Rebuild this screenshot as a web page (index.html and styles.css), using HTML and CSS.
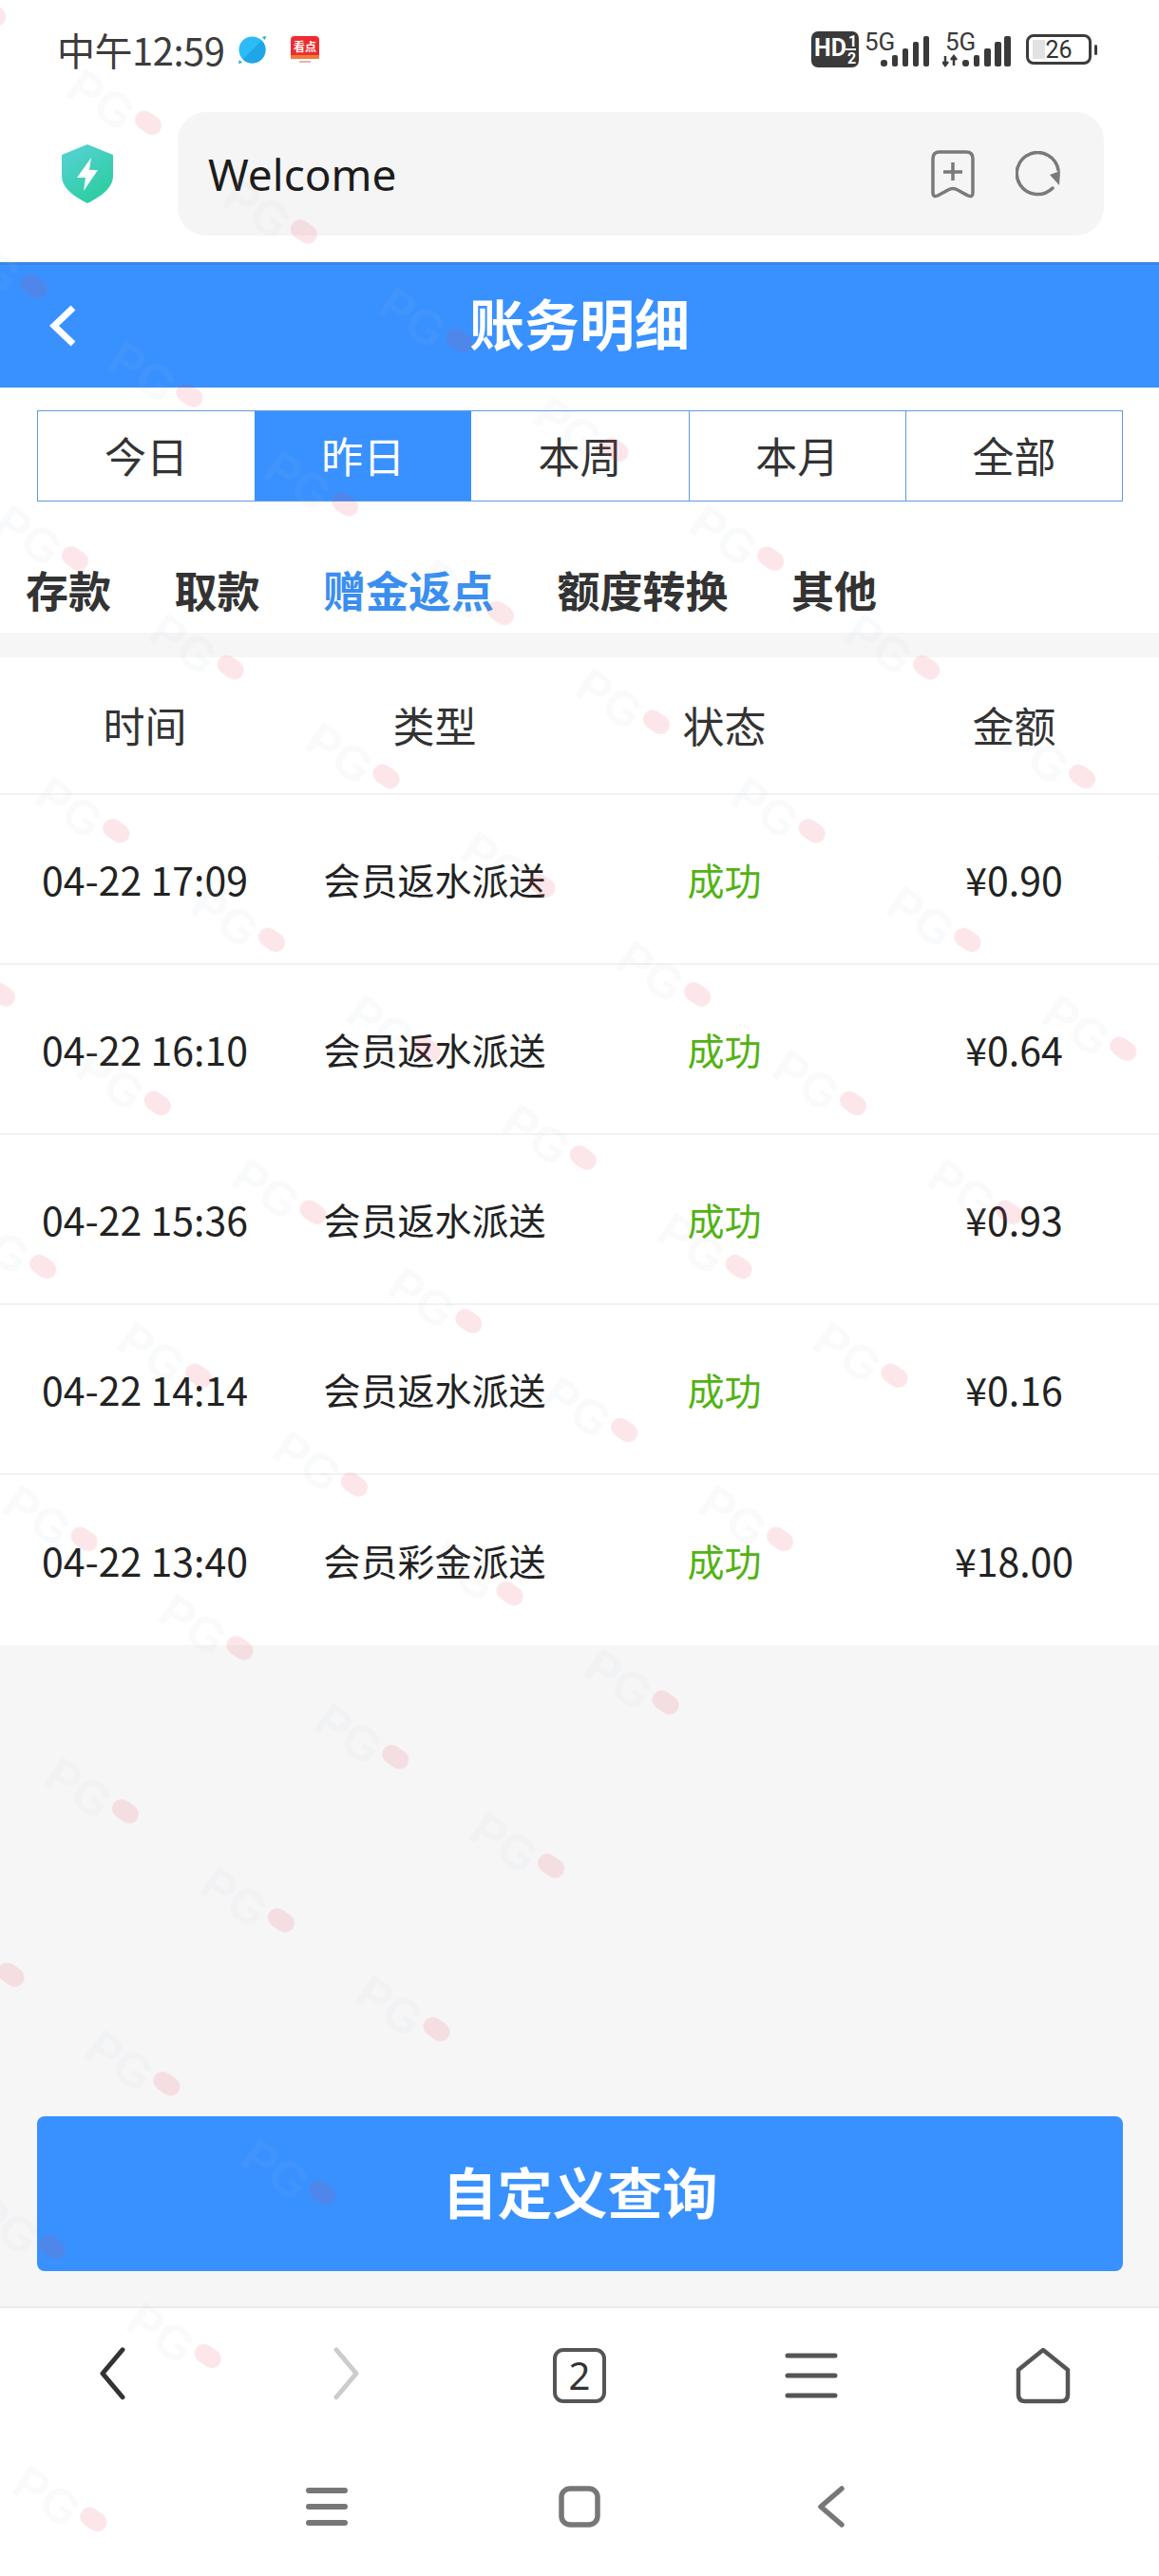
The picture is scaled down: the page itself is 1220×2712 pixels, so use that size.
FILE: index.html

```html
<!DOCTYPE html>
<html lang="zh-CN">
<head>
  <meta charset="UTF-8" />
  <meta name="viewport" content="width=device-width, initial-scale=1.0"/>
  <title>账务明细</title>
  <link rel="stylesheet" href="styles.css">
</head>
<body>
  <div class="phone">
    <div class="status-bar">
      <div class="status-left">
        <span class="clock">中午12:59</span>
        <svg class="ball" viewBox="0 0 31 31">
          <path d="M26 2 L30 1 L29 5 Z M2 26 L1 30 L5 29 Z" fill="#1ea5dc"/>
          <circle cx="15.5" cy="15.5" r="14" fill="#2cbcf5"/>
          <path d="M25.4 5.6 A14 14 0 0 1 5.6 25.4 Z" fill="#1fa6e6"/>
        </svg>
        <svg class="news" viewBox="0 0 30 28">
          <rect x="0" y="0" width="30" height="24" rx="4" fill="#ee2c30"/>
          <rect x="0" y="20" width="30" height="4" fill="#f07a3c"/>
          <text x="15" y="16" class="news-text">看点</text>
          <rect x="9" y="26" width="12" height="2" fill="#e5b5b5"/>
        </svg>
      </div>
      <div class="status-right">
        <svg class="hd" viewBox="0 0 50 38">
          <rect width="50" height="38" rx="7" fill="#3a3a3a"/>
          <text x="3" y="26" class="hd-text">HD</text>
          <text x="39" y="16" class="hd-num">1</text>
          <rect x="36" y="18" width="11" height="2" fill="#fff"/>
          <text x="38" y="34" class="hd-num">2</text>
        </svg>
        <svg class="signal" viewBox="0 -4 68 45">
          <text x="0" y="19" class="sig-text">5G</text>
          <rect x="17" y="29" width="7" height="7" rx="3"/>
          <rect x="29" y="24" width="6" height="12" rx="2"/>
          <rect x="40" y="17" width="6" height="19" rx="2"/>
          <rect x="51" y="10" width="6" height="26" rx="2"/>
          <rect x="62" y="4" width="6" height="32" rx="2"/>
        </svg>
        <svg class="signal signal-data" viewBox="0 -4 72 45">
          <text x="3" y="19" class="sig-text">5G</text>
          <path d="M3 25 V35 M0 31 L3 35 L6 31 M12 35 V25 M9 29 L12 25 L15 29" fill="none" stroke="#3a3a3a" stroke-width="2.5"/>
          <rect x="21" y="29" width="7" height="7" rx="3"/>
          <rect x="33" y="24" width="6" height="12" rx="2"/>
          <rect x="44" y="17" width="7" height="19" rx="2"/>
          <rect x="55" y="10" width="7" height="26" rx="2"/>
          <rect x="65" y="4" width="7" height="32" rx="2"/>
        </svg>
        <div class="battery">
          <div class="battery-body">
            <span class="battery-fill"></span>
            <span class="battery-num">26</span>
          </div>
          <span class="battery-nub"></span>
        </div>
      </div>
    </div>

    <div class="address-row">
      <svg class="shield" viewBox="0 0 54 62">
        <defs>
          <linearGradient id="shieldFill" x1="0.2" y1="0" x2="0.8" y2="1">
            <stop offset="0" stop-color="#55d2d2"/>
            <stop offset="1" stop-color="#28cd9c"/>
          </linearGradient>
        </defs>
        <path d="M27 0 L54 11 V33 C54 46 41 55 27 62 C13 55 0 46 0 33 V11 Z" fill="url(#shieldFill)"/>
        <path d="M31 14 L16 35 H25 L23 49 L38 27 H29 Z" fill="#fff"/>
      </svg>
      <div class="address-pill">
        <span class="address-text">Welcome</span>
        <svg class="bookmark" viewBox="0 0 46 51">
          <path d="M9 2 H37 Q44 2 44 9 V45 Q44 50 39 48 L28 42 Q23 39 18 42 L7 48 Q2 50 2 45 V9 Q2 2 9 2 Z" fill="none" stroke="#7a7a7a" stroke-width="3.5"/>
          <path d="M23 13 V32 M13 23 H33" stroke="#7a7a7a" stroke-width="3.5" fill="none"/>
        </svg>
        <svg class="reload" viewBox="0 0 48 48">
          <path d="M39 39 A22 22 0 1 1 45 20" fill="none" stroke="#7a7a7a" stroke-width="3.5" stroke-linecap="round"/>
          <path d="M36 25 L47 21 L46 36 Z" fill="#7a7a7a"/>
        </svg>
      </div>
    </div>

    <header class="title-bar">
      <svg class="title-back" viewBox="0 0 28 44">
        <path d="M25 3 L5 22 L25 41" fill="none" stroke="#fff" stroke-width="7"/>
      </svg>
      <h1 class="title">账务明细</h1>
    </header>

    <div class="range-section">
      <div class="range-tabs">
        <div class="range-tab">今日</div>
        <div class="range-tab range-tab-on">昨日</div>
        <div class="range-tab">本周</div>
        <div class="range-tab">本月</div>
        <div class="range-tab">全部</div>
      </div>
    </div>

    <nav class="kind-tabs">
      <span class="kind-tab">存款</span>
      <span class="kind-tab">取款</span>
      <span class="kind-tab kind-tab-on">赠金返点</span>
      <span class="kind-tab">额度转换</span>
      <span class="kind-tab">其他</span>
    </nav>

    <section class="records">
      <div class="record record-head">
        <span>时间</span><span>类型</span><span>状态</span><span>金额</span>
      </div>
      <div class="record">
        <span class="num">04-22 17:09</span><span>会员返水派送</span><span class="ok">成功</span><span class="num">¥0.90</span>
      </div>
      <div class="record">
        <span class="num">04-22 16:10</span><span>会员返水派送</span><span class="ok">成功</span><span class="num">¥0.64</span>
      </div>
      <div class="record">
        <span class="num">04-22 15:36</span><span>会员返水派送</span><span class="ok">成功</span><span class="num">¥0.93</span>
      </div>
      <div class="record">
        <span class="num">04-22 14:14</span><span>会员返水派送</span><span class="ok">成功</span><span class="num">¥0.16</span>
      </div>
      <div class="record">
        <span class="num">04-22 13:40</span><span>会员彩金派送</span><span class="ok">成功</span><span class="num">¥18.00</span>
      </div>
    </section>

    <div class="query-wrap">
      <button class="query-btn">自定义查询</button>
    </div>

    <div class="browser-bar">
      <svg class="bar-icon" viewBox="0 0 60 60">
        <path d="M29 4 L8 30 L29 56" transform="translate(8 -1) scale(1 0.96)" fill="none" stroke="#333" stroke-width="5" stroke-linecap="round" stroke-linejoin="round"/>
      </svg>
      <svg class="bar-icon" viewBox="0 0 60 60">
        <path d="M16 4 L37 30 L16 56" transform="translate(2 -1) scale(1 0.96)" fill="none" stroke="#ccc" stroke-width="5" stroke-linecap="round" stroke-linejoin="round"/>
      </svg>
      <div class="tab-count">2</div>
      <svg class="bar-icon" viewBox="0 0 60 60">
        <path d="M5 9 H55 M5 30 H55 M5 51 H55" fill="none" stroke="#555" stroke-width="5" stroke-linecap="round"/>
      </svg>
      <svg class="bar-icon" viewBox="0 0 60 60">
        <path d="M30 3 L56 24 V50 Q56 57 49 57 H11 Q4 57 4 50 V24 Z" fill="none" stroke="#555" stroke-width="4.5" stroke-linejoin="round"/>
      </svg>
    </div>

    <div class="system-nav">
      <svg class="nav-icon" viewBox="0 0 44 44">
        <path d="M3 5 H41 M3 22 H41 M3 39 H41" fill="none" stroke="#777" stroke-width="6" stroke-linecap="round"/>
      </svg>
      <svg class="nav-icon" viewBox="0 0 44 44">
        <rect x="3" y="3" width="38" height="38" rx="9" fill="none" stroke="#777" stroke-width="5.5"/>
      </svg>
      <svg class="nav-icon" viewBox="0 0 44 44">
        <path d="M32 3 L10 22 L32 41" fill="none" stroke="#777" stroke-width="5.5" stroke-linecap="round" stroke-linejoin="round"/>
      </svg>
    </div>

    <svg class="watermark" width="1220" height="2712">
      <defs>
        <pattern id="mark" patternUnits="userSpaceOnUse" width="200" height="210">
          <text x="10" y="131" class="mark-text">PG</text>
          <rect x="85" y="95" width="30" height="20" rx="10" class="mark-pill"/>
        </pattern>
      </defs>
      <g transform="translate(110.3 1763.6) rotate(35)">
        <rect x="-1400" y="-1470" width="2000" height="2600" fill="url(#mark)"/>
      </g>
    </svg>
  </div>
</body>
</html>
```

FILE: styles.css

```css
* {
  box-sizing: border-box;
}
html, body {
  margin: 0;
  padding: 0;
}
body {
  background: #f6f6f7;
  font-family: "Noto Sans CJK SC", "Noto Sans", sans-serif;
  color: #333;
}
.phone {
  position: relative;
  width: 1220px;
  height: 2712px;
  display: flex;
  flex-direction: column;
  overflow: hidden;
  background: #f6f6f7;
}

/* status bar */
.status-bar {
  height: 104px;
  flex: none;
  background: #fff;
  display: flex;
  justify-content: space-between;
  align-items: center;
  padding: 0 65px 0 60px;
}
.status-left, .status-right {
  display: flex;
  align-items: center;
}
.clock {
  font-family: "Noto Sans CJK SC", sans-serif;
  font-size: 40px;
  color: #3c3c3c;
  letter-spacing: -0.5px;
  margin-right: 14px;
}
.ball {
  width: 31px;
  height: 31px;
  margin-right: 25px;
}
.news {
  width: 30px;
  height: 28px;
}
.news-text {
  font-size: 12px;
  font-weight: 700;
  fill: #fff;
  text-anchor: middle;
}
.hd {
  width: 50px;
  height: 38px;
  margin-right: 6px;
}
.hd-text {
  font-family: "Roboto", sans-serif;
  font-size: 25px;
  font-weight: 700;
  fill: #fff;
}
.hd-num {
  font-family: "Roboto", sans-serif;
  font-size: 16px;
  font-weight: 700;
  fill: #fff;
}
.signal {
  width: 68px;
  height: 45px;
  margin-right: 14px;
  fill: #3a3a3a;
}
.signal-data {
  width: 72px;
  margin-right: 16px;
}
.sig-text {
  font-family: "Roboto", sans-serif;
  font-size: 26px;
  fill: #3a3a3a;
}
.battery {
  display: flex;
  align-items: center;
}
.battery-body {
  position: relative;
  width: 69px;
  height: 32px;
  border: 3px solid #3c3c3c;
  border-radius: 8px;
  display: flex;
  align-items: center;
  justify-content: center;
}
.battery-fill {
  position: absolute;
  left: 4px;
  top: 3px;
  bottom: 3px;
  width: 13px;
  background: #e2e2e2;
}
.battery-num {
  position: relative;
  font-family: "Roboto", sans-serif;
  font-size: 25px;
  line-height: 1;
  color: #333;
}
.battery-nub {
  width: 3px;
  height: 11px;
  margin-left: 3px;
  border-radius: 2px;
  background: #3c3c3c;
}

/* address bar */
.address-row {
  height: 172px;
  flex: none;
  background: #fff;
  display: flex;
  align-items: flex-start;
  padding: 14px 58px 0 65px;
}
.shield {
  width: 54px;
  height: 62px;
  margin: 34px 68px 0 0;
  flex: none;
}
.address-pill {
  flex: 1;
  height: 130px;
  background: #f5f5f5;
  border-radius: 30px;
  display: flex;
  align-items: center;
  padding: 0 45px 0 32px;
}
.address-text {
  flex: 1;
  font-family: "Noto Sans", sans-serif;
  font-size: 46px;
  color: #1c1c1c;
}
.bookmark {
  width: 46px;
  height: 51px;
  margin-right: 43px;
}
.reload {
  width: 48px;
  height: 48px;
}

/* blue title */
.title-bar {
  position: relative;
  height: 132px;
  flex: none;
  background: #3891ff;
  border-top: 3px solid #3a86e4;
  display: flex;
  align-items: center;
  justify-content: center;
  padding-bottom: 10px;
}
.title-back {
  position: absolute;
  left: 52px;
  top: 42px;
  width: 28px;
  height: 44px;
}
.title {
  margin: 0;
  font-size: 58px;
  font-weight: 700;
  color: #fff;
}

/* date range */
.range-section {
  height: 156px;
  flex: none;
  background: #fff;
  padding: 24px 38px 0 39px;
}
.range-tabs {
  display: grid;
  grid-template-columns: repeat(5, 1fr);
  height: 96px;
  border: 1px solid #5f9ae0;
}
.range-tab {
  display: flex;
  align-items: center;
  justify-content: center;
  font-size: 44px;
  color: #333;
  border-left: 1px solid #5f9ae0;
  padding-bottom: 3px;
}
.range-tab:first-child {
  border-left: none;
}
.range-tab-on {
  background: #3891ff;
  color: #fff;
  border-left: none;
}
.range-tab-on + .range-tab {
  border-left: none;
}

/* record kinds */
.kind-tabs {
  height: 102px;
  flex: none;
  background: #fff;
  display: flex;
  align-items: center;
  gap: 66.5px;
  padding: 10px 0 0 27px;
}
.kind-tab {
  font-size: 45px;
  font-weight: 700;
  color: #333;
}
.kind-tab-on {
  color: #3a8ef0;
}

/* table */
.records {
  margin-top: 26px;
  flex: none;
  background: #fff;
}
.record {
  height: 179px;
  display: grid;
  grid-template-columns: repeat(4, 305px);
  align-items: center;
  justify-items: center;
  font-size: 39px;
  color: #222;
  border-bottom: 2px solid #f2f2f2;
  padding-bottom: 2px;
}
.record:last-child {
  border-bottom: none;
}
.record-head {
  height: 145px;
  font-size: 44px;
  color: #333;
}
.num {
  font-size: 41px;
}
.ok {
  color: #52b213;
}

/* bottom button */
.query-wrap {
  flex: 1;
  padding: 496px 38px 0 39px;
}
.query-btn {
  width: 100%;
  height: 163px;
  border: none;
  border-radius: 8px;
  background: #3891ff;
  color: #fff;
  font-family: inherit;
  font-size: 58px;
  font-weight: 700;
  padding: 0 0 8px;
}

/* browser toolbar */
.browser-bar {
  height: 150px;
  flex: none;
  background: #fff;
  border-top: 2px solid #ebebeb;
  display: grid;
  grid-template-columns: repeat(5, 1fr);
  justify-items: center;
  align-items: center;
  padding: 0 0 7px 0;
}
.bar-icon {
  width: 60px;
  height: 60px;
}
.tab-count {
  width: 56px;
  height: 58px;
  border: 4px solid #555;
  border-radius: 11px;
  display: flex;
  align-items: center;
  justify-content: center;
  font-family: "Noto Sans", sans-serif;
  font-size: 40px;
  color: #333;
}
.system-nav {
  height: 134px;
  flex: none;
  background: #fff;
  display: flex;
  align-items: flex-start;
  justify-content: center;
  gap: 222px;
  padding-top: 39px;
}
.nav-icon {
  width: 44px;
  height: 44px;
}

/* watermark lies over the whole page */
.watermark {
  position: absolute;
  left: 0;
  top: 0;
  pointer-events: none;
}
.mark-text {
  font-family: "Liberation Sans", sans-serif;
  font-size: 50px;
  font-weight: 700;
  fill: rgba(170, 178, 195, 0.07);
}
.mark-pill {
  fill: rgba(235, 60, 85, 0.13);
}
```
